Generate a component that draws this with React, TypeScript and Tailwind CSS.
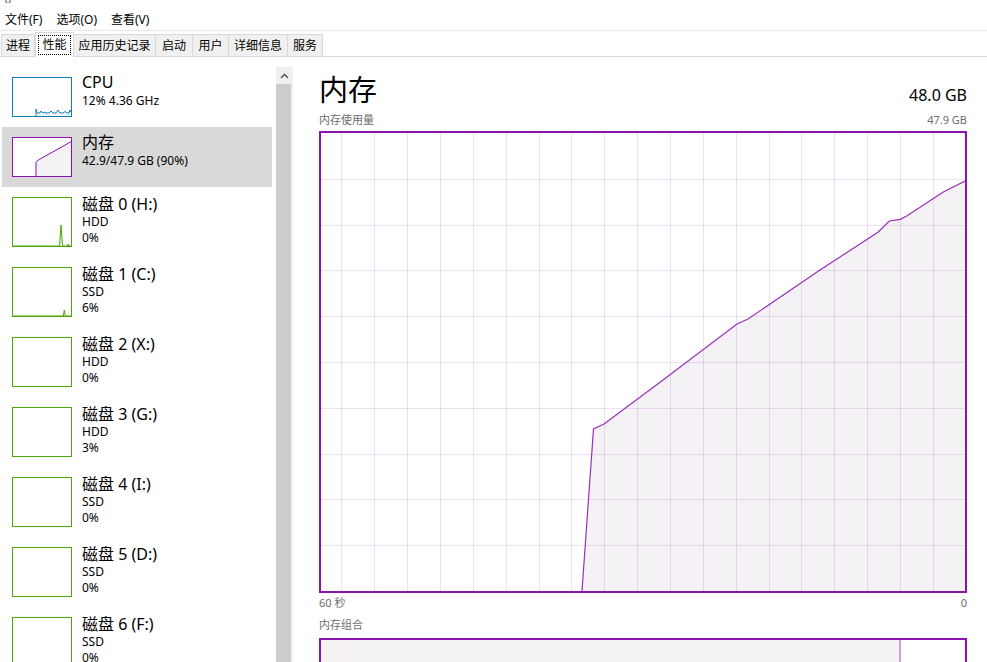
import React from 'react';

const menus = ['文件(F)', '选项(O)', '查看(V)'];

const tabs = [
  { label: '进程', w: 'w-[34px]' },
  { label: '性能', w: 'w-[39px]', active: true },
  { label: '应用历史记录', w: 'w-[82px]' },
  { label: '启动', w: 'w-[37px]' },
  { label: '用户', w: 'w-[36px]' },
  { label: '详细信息', w: 'w-[59px]' },
  { label: '服务', w: 'w-[35px]' },
];

const disks = [
  { title: '磁盘 0 (H:)', type: 'HDD', pct: '0%', line: '0,48 46.5,48 48,27 49.5,48 54.5,48 55.3,46 56,48 58,48' },
  { title: '磁盘 1 (C:)', type: 'SSD', pct: '6%', line: '0,48 50.3,48 51.3,42 52.3,48 58,48' },
  { title: '磁盘 2 (X:)', type: 'HDD', pct: '0%' },
  { title: '磁盘 3 (G:)', type: 'HDD', pct: '3%' },
  { title: '磁盘 4 (I:)', type: 'SSD', pct: '0%' },
  { title: '磁盘 5 (D:)', type: 'SSD', pct: '0%' },
  { title: '磁盘 6 (F:)', type: 'SSD', pct: '0%' },
];

// memory usage history, in px inside the 644x458 plot
const usage: [number, number][] = [
  [261, 458], [272.5, 296], [283, 291], [340.7, 248], [416, 191], [427, 186],
  [499, 137], [557.3, 99], [568.3, 88], [579.3, 86.3], [585.7, 83], [622.3, 59], [644, 48],
];

function MenuBar() {
  return (
    <>
      <div className="h-[4px] pl-[5px]">
        <div className="h-[3px] w-[6px] border-x-2 border-b border-[#a5a5a5]" />
      </div>
      <div className="flex h-[26px] gap-[14px] pl-[5px] pt-[8px] text-[12px] leading-[16px]">
        {menus.map((m) => (
          <span key={m}>{m}</span>
        ))}
      </div>
      <div className="h-px bg-[#e8e8e8]" />
    </>
  );
}

function Tabs() {
  return (
    <div className="flex h-[26px] items-end border-b border-[#d9d9d9] pl-[1px]">
      {tabs.map((t, i) =>
        t.active ? (
          <div
            key={t.label}
            className={`relative z-10 -mb-px h-[25px] ${t.w} border border-b-0 border-[#d9d9d9] bg-white p-[2px]`}
          >
            <div className="flex h-full w-full items-center justify-center border border-dotted border-black text-[12px] leading-[16px]">
              {t.label}
            </div>
          </div>
        ) : (
          <div
            key={t.label}
            className={`flex h-[22px] ${t.w} items-center justify-center border-t border-r border-[#d9d9d9] bg-[#f0f0f0] text-[12px] leading-[16px] ${i === 0 ? 'border-l' : ''}`}
          >
            {t.label}
          </div>
        )
      )}
    </div>
  );
}

function Thumb({ border, fill, tall, line }: { border: string; fill: string; tall?: boolean; line?: string }) {
  const h = tall ? 48 : 38;
  return (
    <div className={`w-[60px] border ${tall ? 'h-[50px]' : 'h-[40px]'} bg-white`} style={{ borderColor: border }}>
      <svg width={58} height={h} className="block">
        {line && (
          <>
            <polygon points={`${line} 58,${h}`} fill={fill} />
            <polyline points={line} fill="none" stroke={border} strokeWidth={1} />
          </>
        )}
      </svg>
    </div>
  );
}

function SideItem({
  thumb,
  title,
  lines,
  selected,
  tall,
}: {
  thumb: React.ReactNode;
  title: string;
  lines: string[];
  selected?: boolean;
  tall?: boolean;
}) {
  return (
    <div className={`flex w-[270px] ${tall ? 'h-[70px]' : 'h-[60px]'} ${selected ? 'bg-[#d9d9d9]' : ''}`}>
      <div className="pl-[10px] pt-[10px]">{thumb}</div>
      <div className={`pl-[10px] ${tall ? 'pt-[7px]' : 'pt-[5px]'}`}>
        <div className="text-[16px] leading-[20px]">{title}</div>
        {lines.map((l) => (
          <div key={l} className={`text-[12px] ${tall ? 'leading-[16px]' : 'leading-[17px]'}`}>
            {l}
          </div>
        ))}
      </div>
    </div>
  );
}

function Sidebar() {
  return (
    <div className="flex w-[293px] shrink-0">
      <div className="w-[276px] pl-[2px] pt-[10px]">
        <SideItem
          title="CPU"
          lines={['12% 4.36 GHz']}
          thumb={
            <Thumb
              border="#117dbb"
              fill="#eef6fb"
              line="23,38 23,31 24,35 27,35 28,33 30,35 32,34 33,35 36,35 38,33 40,35 43,35 45,32 47,35 50,35 52,33.5 54,35 56,35 57,32 58,34"
            />
          }
        />
        <SideItem
          selected
          title="内存"
          lines={['42.9/47.9 GB (90%)']}
          thumb={<Thumb border="#8b12ae" fill="#f4f2f4" line="23,38 23,24.3 25.3,22 58,3.7" />}
        />
        {disks.map((d) => (
          <SideItem
            key={d.title}
            tall
            title={d.title}
            lines={[d.type, d.pct]}
            thumb={<Thumb tall border="#4da60c" fill="#eef7e8" line={d.line} />}
          />
        ))}
      </div>
      <div className="mt-[10px] flex w-[17px] flex-col bg-[#f0f0f0]">
        <div className="flex h-[17px] items-center justify-center">
          <svg width={9} height={6} viewBox="0 0 9 6">
            <path d="M1 5 L4.5 1.5 L8 5" fill="none" stroke="#606060" strokeWidth={1.6} />
          </svg>
        </div>
        <div className="w-[15px] flex-1 bg-[#cdcdcd]" />
      </div>
    </div>
  );
}

function UsageChart() {
  const W = 644;
  const H = 458;
  const line = usage.map((p) => p.join(',')).join(' ');
  const vx = Array.from({ length: 19 }, (_, i) => Math.round(20.3 + i * 32.87) + 0.5);
  const hy = Array.from({ length: 9 }, (_, i) => Math.round((i + 1) * 45.8) + 0.5);
  return (
    <div className="mt-[4px] h-[462px] border-2 border-[#8b12ae]">
      <svg width={W} height={H} className="block">
        <polygon points={`${line} ${W},${H}`} fill="#f4f2f4" />
        {vx.map((x) => (
          <line key={`v${x}`} x1={x} x2={x} y1={0} y2={H} stroke="#8b12ae" strokeOpacity={0.13} />
        ))}
        {hy.map((y) => (
          <line key={`h${y}`} x1={0} x2={W} y1={y} y2={y} stroke="#8b12ae" strokeOpacity={0.13} />
        ))}
        <polyline points={line} fill="none" stroke="#9a2fba" strokeWidth={1.2} />
      </svg>
    </div>
  );
}

function MemoryPanel() {
  return (
    <div className="flex min-w-0 flex-1 flex-col pl-[26px] pr-[20px] pt-[18px]">
      <div className="flex items-baseline justify-between">
        <span className="text-[29px] leading-[29px]">内存</span>
        <span className="text-[16px] leading-[20px]">48.0 GB</span>
      </div>
      <div className="mt-[8px] flex justify-between text-[11px] leading-[14px] text-[#6e6e6e]">
        <span>内存使用量</span>
        <span>47.9 GB</span>
      </div>
      <UsageChart />
      <div className="mt-[3px] flex justify-between text-[11px] leading-[14px] text-[#6e6e6e]">
        <span>60 秒</span>
        <span>0</span>
      </div>
      <div className="mt-[8px] text-[11px] leading-[14px] text-[#6e6e6e]">内存组合</div>
      <div className="mt-[6px] flex h-[60px] shrink-0 border-2 border-[#8b12ae]">
        <div className="w-[578px] bg-[#f4f2f4]" />
        <div className="w-[2px] bg-[#c9a6d3]" />
        <div className="flex-1 bg-white" />
      </div>
    </div>
  );
}

export default function App() {
  return (
    <div className="flex h-[662px] w-[987px] flex-col overflow-hidden bg-white font-['Noto_Sans','Noto_Sans_CJK_SC',sans-serif] text-black">
      <MenuBar />
      <Tabs />
      <div className="flex min-h-0 flex-1">
        <Sidebar />
        <MemoryPanel />
      </div>
    </div>
  );
}
